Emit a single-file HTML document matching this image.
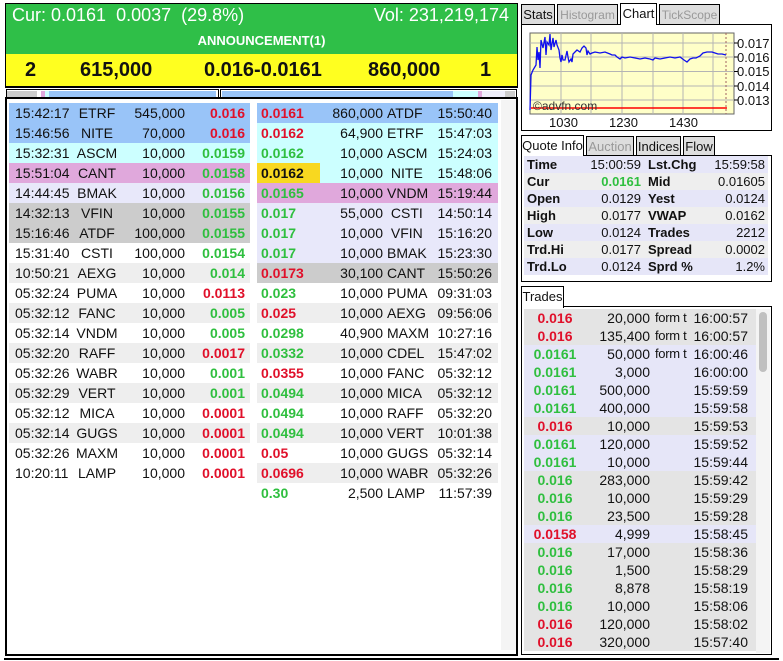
<!DOCTYPE html>
<html><head><meta charset="utf-8"><style>
*{box-sizing:border-box;margin:0;padding:0}
body{width:783px;height:661px;background:#fff;font-family:"Liberation Sans",Arial,sans-serif;font-size:14px;color:#111;position:relative;overflow:hidden}
.a{position:absolute}
.row{position:absolute;height:20px;line-height:20px;white-space:nowrap}
.row span{position:absolute}
.L{left:9px;width:241px}
.L .t{left:6px}.L .k{left:59px;width:58px;text-align:center}.L .v{right:65px}.L .p{right:5px;font-weight:bold}
.R{left:257px;width:241px}
.R .p{left:4px;font-weight:bold}.R .v{right:115px}.R .k{left:130px}.R .t{right:6px}
.g{color:#2fbf3f}.r{color:#e0102a}
.bl{background:#99c4f8}.cy{background:#ccffff}.pk{background:#e0a8dc}.lv{background:#e8e8fa}.gr{background:#cccccc}.ee{background:#eeeeee}
.tab{position:absolute;height:21px;line-height:20px;border:1px solid #000;border-bottom:none;background:#ddd;color:#999;text-align:center;font-size:12px;white-space:nowrap;overflow:hidden}
.tab.on{background:#fff;color:#111;height:22px}
.tab.m{font-size:13px}
.q{position:absolute;left:524px;width:244px;height:17px;line-height:17px;font-size:13px}
.q span{position:absolute}
.q .l1{left:3px;font-weight:bold}.q .v1{right:127px}.q .l2{left:124px;font-weight:bold}.q .v2{right:3px}
.tr{position:absolute;left:524px;width:232px;height:18px;line-height:18px;white-space:nowrap}
.tr span{position:absolute}
.tr .p{left:0;width:62px;text-align:center;font-weight:bold}.tr .v{right:106px}.tr .f{left:131px;font-size:13px;letter-spacing:-0.3px}.tr .t{right:8px}
.tg{background:#e4e4e4}.tl{background:#e6e6f8}
</style></head><body>
<div class="a" style="left:5px;top:3px;width:513px;height:653px;border:2px solid #000"></div>
<div class="a" style="left:6px;top:4px;width:511px;height:50px;background:#2fbf48"></div>
<div class="a" style="left:12px;top:5px;color:#fff;font-size:18px">Cur: 0.0161&nbsp; 0.0037&nbsp; (29.8%)</div>
<div class="a" style="right:274px;top:5px;color:#fff;font-size:18px">Vol: 231,219,174</div>
<div class="a" style="left:6px;top:33px;width:511px;text-align:center;color:#fff;font-weight:bold;font-size:13px">ANNOUNCEMENT(1)</div>
<div class="a" style="left:6px;top:54px;width:511px;height:34px;background:#ffff20;border-bottom:2px solid #000"></div>
<div class="a" style="left:25px;top:59px;font-weight:bold;font-size:20px">2</div>
<div class="a" style="left:80px;top:59px;font-weight:bold;font-size:20px">615,000</div>
<div class="a" style="left:204px;top:59px;font-weight:bold;font-size:20px">0.016-0.0161</div>
<div class="a" style="left:368px;top:59px;font-weight:bold;font-size:20px">860,000</div>
<div class="a" style="left:480px;top:59px;font-weight:bold;font-size:20px">1</div>
<div class="a" style="left:5px;top:88px;width:513px;height:11px;background:#fff;border-bottom:2px solid #000"></div>
<div class="a" style="left:6px;top:89px;width:213px;height:9px;border:1px solid #000"></div>
<div class="a" style="left:220px;top:89px;width:297px;height:9px;border:1px solid #000"></div>
<div class="a" style="left:7px;top:91px;width:30px;height:6px;background:#ccc"></div>
<div class="a" style="left:41px;top:91px;width:4px;height:6px;background:#e0a8dc"></div>
<div class="a" style="left:45px;top:91px;width:4px;height:6px;background:#ccffff"></div>
<div class="a" style="left:49px;top:91px;width:167px;height:6px;background:#99c4f8"></div>
<div class="a" style="left:222px;top:91px;width:231px;height:6px;background:#99c4f8"></div>
<div class="a" style="left:453px;top:91px;width:25px;height:6px;background:#ccffff"></div>
<div class="a" style="left:478px;top:91px;width:4px;height:6px;background:#e0a8dc"></div>
<div class="a" style="left:482px;top:91px;width:23px;height:6px;background:#eeeefa"></div>
<div class="a" style="left:505px;top:91px;width:10px;height:6px;background:#ccc"></div>
<div class="a" style="left:501px;top:100px;width:15px;height:550px;background:#f4f4f4"></div>

<div class="row L bl" style="top:103px"><span class="t">15:42:17</span><span class="k">ETRF</span><span class="v">545,000</span><span class="p r">0.016</span></div>
<div class="row L bl" style="top:123px"><span class="t">15:46:56</span><span class="k">NITE</span><span class="v">70,000</span><span class="p r">0.016</span></div>
<div class="row L cy" style="top:143px"><span class="t">15:32:31</span><span class="k">ASCM</span><span class="v">10,000</span><span class="p g">0.0159</span></div>
<div class="row L pk" style="top:163px"><span class="t">15:51:04</span><span class="k">CANT</span><span class="v">10,000</span><span class="p g">0.0158</span></div>
<div class="row L lv" style="top:183px"><span class="t">14:44:45</span><span class="k">BMAK</span><span class="v">10,000</span><span class="p g">0.0156</span></div>
<div class="row L gr" style="top:203px"><span class="t">14:32:13</span><span class="k">VFIN</span><span class="v">10,000</span><span class="p g">0.0155</span></div>
<div class="row L gr" style="top:223px"><span class="t">15:16:46</span><span class="k">ATDF</span><span class="v">100,000</span><span class="p g">0.0155</span></div>
<div class="row L" style="top:243px"><span class="t">15:31:40</span><span class="k">CSTI</span><span class="v">100,000</span><span class="p g">0.0154</span></div>
<div class="row L ee" style="top:263px"><span class="t">10:50:21</span><span class="k">AEXG</span><span class="v">10,000</span><span class="p g">0.014</span></div>
<div class="row L" style="top:283px"><span class="t">05:32:24</span><span class="k">PUMA</span><span class="v">10,000</span><span class="p r">0.0113</span></div>
<div class="row L ee" style="top:303px"><span class="t">05:32:12</span><span class="k">FANC</span><span class="v">10,000</span><span class="p g">0.005</span></div>
<div class="row L" style="top:323px"><span class="t">05:32:14</span><span class="k">VNDM</span><span class="v">10,000</span><span class="p g">0.005</span></div>
<div class="row L ee" style="top:343px"><span class="t">05:32:20</span><span class="k">RAFF</span><span class="v">10,000</span><span class="p r">0.0017</span></div>
<div class="row L" style="top:363px"><span class="t">05:32:26</span><span class="k">WABR</span><span class="v">10,000</span><span class="p g">0.001</span></div>
<div class="row L ee" style="top:383px"><span class="t">05:32:29</span><span class="k">VERT</span><span class="v">10,000</span><span class="p g">0.001</span></div>
<div class="row L" style="top:403px"><span class="t">05:32:12</span><span class="k">MICA</span><span class="v">10,000</span><span class="p r">0.0001</span></div>
<div class="row L ee" style="top:423px"><span class="t">05:32:14</span><span class="k">GUGS</span><span class="v">10,000</span><span class="p r">0.0001</span></div>
<div class="row L" style="top:443px"><span class="t">05:32:26</span><span class="k">MAXM</span><span class="v">10,000</span><span class="p r">0.0001</span></div>
<div class="row L" style="top:463px"><span class="t">10:20:11</span><span class="k">LAMP</span><span class="v">10,000</span><span class="p r">0.0001</span></div>

<div class="row R bl" style="top:103px"><span class="p r">0.0161</span><span class="v">860,000</span><span class="k">ATDF</span><span class="t">15:50:40</span></div>
<div class="row R cy" style="top:123px"><span class="p r">0.0162</span><span class="v">64,900</span><span class="k">ETRF</span><span class="t">15:47:03</span></div>
<div class="row R cy" style="top:143px"><span class="p g">0.0162</span><span class="v">10,000</span><span class="k">ASCM</span><span class="t">15:24:03</span></div>
<div class="row R cy" style="top:163px"><span class="a" style="left:0;top:0;width:63px;height:20px;background:#f8d820"></span><span class="p">0.0162</span><span class="v">10,000</span><span class="k">&nbsp;NITE</span><span class="t">15:48:06</span></div>
<div class="row R pk" style="top:183px"><span class="p g">0.0165</span><span class="v">10,000</span><span class="k">VNDM</span><span class="t">15:19:44</span></div>
<div class="row R lv" style="top:203px"><span class="p g">0.017</span><span class="v">55,000</span><span class="k">&nbsp;CSTI</span><span class="t">14:50:14</span></div>
<div class="row R lv" style="top:223px"><span class="p g">0.017</span><span class="v">10,000</span><span class="k">&nbsp;VFIN</span><span class="t">15:16:20</span></div>
<div class="row R lv" style="top:243px"><span class="p g">0.017</span><span class="v">10,000</span><span class="k">BMAK</span><span class="t">15:23:30</span></div>
<div class="row R gr" style="top:263px"><span class="p r">0.0173</span><span class="v">30,100</span><span class="k">CANT</span><span class="t">15:50:26</span></div>
<div class="row R" style="top:283px"><span class="p g">0.023</span><span class="v">10,000</span><span class="k">PUMA</span><span class="t">09:31:03</span></div>
<div class="row R ee" style="top:303px"><span class="p r">0.025</span><span class="v">10,000</span><span class="k">AEXG</span><span class="t">09:56:06</span></div>
<div class="row R" style="top:323px"><span class="p g">0.0298</span><span class="v">40,900</span><span class="k">MAXM</span><span class="t">10:27:16</span></div>
<div class="row R ee" style="top:343px"><span class="p g">0.0332</span><span class="v">10,000</span><span class="k">CDEL</span><span class="t">15:47:02</span></div>
<div class="row R" style="top:363px"><span class="p r">0.0355</span><span class="v">10,000</span><span class="k">FANC</span><span class="t">05:32:12</span></div>
<div class="row R ee" style="top:383px"><span class="p g">0.0494</span><span class="v">10,000</span><span class="k">MICA</span><span class="t">05:32:12</span></div>
<div class="row R" style="top:403px"><span class="p g">0.0494</span><span class="v">10,000</span><span class="k">RAFF</span><span class="t">05:32:20</span></div>
<div class="row R ee" style="top:423px"><span class="p g">0.0494</span><span class="v">10,000</span><span class="k">VERT</span><span class="t">10:01:38</span></div>
<div class="row R" style="top:443px"><span class="p r">0.05</span><span class="v">10,000</span><span class="k">GUGS</span><span class="t">05:32:14</span></div>
<div class="row R ee" style="top:463px"><span class="p r">0.0696</span><span class="v">10,000</span><span class="k">WABR</span><span class="t">05:32:26</span></div>
<div class="row R" style="top:483px"><span class="p g">0.30</span><span class="v">2,500</span><span class="k">LAMP</span><span class="t">11:57:39</span></div>

<div class="a" style="left:4px;top:658px;width:775px;height:3px;border-top:2px solid #000"></div>

<div class="tab m" style="left:521px;top:4px;width:34px;color:#111">Stats</div>
<div class="tab" style="left:557px;top:4px;width:61px">Histogram</div>
<div class="tab on m" style="left:620px;top:3px;width:37px">Chart</div>
<div class="tab" style="left:659px;top:4px;width:61px">TickScope</div>
<div class="a" style="left:521px;top:24px;width:251px;height:107px;border:1px solid #000"></div>
<div class="a" style="left:621px;top:24px;width:35px;height:1px;background:#fff"></div>
<svg class="a" style="left:0;top:0" width="783" height="140">
<rect x="530" y="33" width="204" height="81" fill="#ffffc8" stroke="#666" stroke-width="1"/>
<g stroke="#b4b4b4" stroke-width="1">
<line x1="561" y1="33" x2="561" y2="114"/><line x1="591" y1="33" x2="591" y2="114"/><line x1="622" y1="33" x2="622" y2="114"/><line x1="653" y1="33" x2="653" y2="114"/><line x1="683" y1="33" x2="683" y2="114"/><line x1="713" y1="33" x2="713" y2="114"/>
<line x1="530" y1="43" x2="734" y2="43"/><line x1="530" y1="57" x2="734" y2="57"/><line x1="530" y1="71.5" x2="734" y2="71.5"/><line x1="530" y1="86" x2="734" y2="86"/><line x1="530" y1="100" x2="734" y2="100"/>
</g>
<line x1="726" y1="33" x2="726" y2="114" stroke="#a06060" stroke-dasharray="2,2"/>
<g stroke="#000"><line x1="734" y1="43" x2="738" y2="43"/><line x1="734" y1="57" x2="738" y2="57"/><line x1="734" y1="71.5" x2="738" y2="71.5"/><line x1="734" y1="86" x2="738" y2="86"/><line x1="734" y1="100" x2="738" y2="100"/></g>
<polyline fill="none" stroke="#1010ee" stroke-width="1.3" points="530,110 531,75 533,70 536,65 537,47 538,60 539,52 540,68 541,40 543,48 545,37 546,55 547,42 549,45 550,34 551,50 553,38 554,47 556,40 557,45 559,50 560,58 561,62 562,55 563,60 565,60 567,51 568,57 569,62 571,59 572,62 573,54 575,52 577,50 580,52 582,48 584,46 586,48 587,55 588,51 590,54 592,53 595,52 600,53 605,52 610,54 612,55 615,55 617,57 620,59 622,57 625,58 630,57 635,58 640,59 645,58 650,59 653,60 655,58 660,59 665,58 670,57 675,58 680,57 684,60 687,62 690,59 693,58 696,58 700,56 703,53 707,52 712,52 715,53 718,54 722,54 726,55"/>
<line x1="531" y1="108" x2="727" y2="108" stroke="#ff0000" stroke-width="1.5"/>
<text x="533" y="110" font-family="Liberation Sans" font-size="12" fill="#333">©advfn.com</text>
<g font-family="Liberation Sans" font-size="13" fill="#111">
<text x="737" y="48">0.017</text><text x="737" y="62">0.016</text><text x="737" y="76">0.015</text><text x="737" y="91">0.014</text><text x="737" y="105">0.013</text>
<text x="549" y="127">1030</text><text x="609" y="127">1230</text><text x="669" y="127">1430</text>
</g>
</svg>

<div class="tab on m" style="left:521px;top:135px;width:63px">Quote Info</div>
<div class="tab m" style="left:586px;top:136px;width:48px">Auction</div>
<div class="tab m" style="left:636px;top:136px;width:45px;color:#111">Indices</div>
<div class="tab m" style="left:683px;top:136px;width:32px;color:#111">Flow</div>
<div class="a" style="left:521px;top:155px;width:251px;height:127px;border:1px solid #000"></div>
<div class="a" style="left:522px;top:155px;width:61px;height:1px;background:#fff"></div>
<div class="q tl" style="top:156px"><span class="l1">Time</span><span class="v1">15:00:59</span><span class="l2">Lst.Chg</span><span class="v2">15:59:58</span></div>
<div class="q ee" style="top:173px"><span class="l1">Cur</span><span class="v1 g" style="font-weight:bold">0.0161</span><span class="l2">Mid</span><span class="v2">0.01605</span></div>
<div class="q tl" style="top:190px"><span class="l1">Open</span><span class="v1">0.0129</span><span class="l2">Yest</span><span class="v2">0.0124</span></div>
<div class="q ee" style="top:207px"><span class="l1">High</span><span class="v1">0.0177</span><span class="l2">VWAP</span><span class="v2">0.0162</span></div>
<div class="q tl" style="top:224px"><span class="l1">Low</span><span class="v1">0.0124</span><span class="l2">Trades</span><span class="v2">2212</span></div>
<div class="q ee" style="top:241px"><span class="l1">Trd.Hi</span><span class="v1">0.0177</span><span class="l2">Spread</span><span class="v2">0.0002</span></div>
<div class="q tl" style="top:258px"><span class="l1">Trd.Lo</span><span class="v1">0.0124</span><span class="l2">Sprd %</span><span class="v2">1.2%</span></div>

<div class="tab on m" style="left:521px;top:286px;width:43px">Trades</div>
<div class="a" style="left:521px;top:306px;width:251px;height:349px;border:1px solid #000"></div>
<div class="a" style="left:522px;top:306px;width:41px;height:1px;background:#fff"></div>
<div class="a" style="left:756px;top:309px;width:14px;height:344px;background:#f4f4f4"></div>
<div class="a" style="left:759px;top:312px;width:8px;height:60px;background:#c0c0c0;border-radius:4px"></div>
<div class="tr tg" style="top:309px"><span class="p r">0.016</span><span class="v">20,000</span><span class="f">form t</span><span class="t">16:00:57</span></div>
<div class="tr tg" style="top:327px"><span class="p r">0.016</span><span class="v">135,400</span><span class="f">form t</span><span class="t">16:00:57</span></div>
<div class="tr tl" style="top:345px"><span class="p g">0.0161</span><span class="v">50,000</span><span class="f">form t</span><span class="t">16:00:46</span></div>
<div class="tr tl" style="top:363px"><span class="p g">0.0161</span><span class="v">3,000</span><span class="t">16:00:00</span></div>
<div class="tr tl" style="top:381px"><span class="p g">0.0161</span><span class="v">500,000</span><span class="t">15:59:59</span></div>
<div class="tr tl" style="top:399px"><span class="p g">0.0161</span><span class="v">400,000</span><span class="t">15:59:58</span></div>
<div class="tr tg" style="top:417px"><span class="p r">0.016</span><span class="v">10,000</span><span class="t">15:59:53</span></div>
<div class="tr tl" style="top:435px"><span class="p g">0.0161</span><span class="v">120,000</span><span class="t">15:59:52</span></div>
<div class="tr tl" style="top:453px"><span class="p g">0.0161</span><span class="v">10,000</span><span class="t">15:59:44</span></div>
<div class="tr tg" style="top:471px"><span class="p g">0.016</span><span class="v">283,000</span><span class="t">15:59:42</span></div>
<div class="tr tg" style="top:489px"><span class="p g">0.016</span><span class="v">10,000</span><span class="t">15:59:29</span></div>
<div class="tr tg" style="top:507px"><span class="p g">0.016</span><span class="v">23,500</span><span class="t">15:59:28</span></div>
<div class="tr tl" style="top:525px"><span class="p r">0.0158</span><span class="v">4,999</span><span class="t">15:58:45</span></div>
<div class="tr tg" style="top:543px"><span class="p g">0.016</span><span class="v">17,000</span><span class="t">15:58:36</span></div>
<div class="tr tg" style="top:561px"><span class="p g">0.016</span><span class="v">1,500</span><span class="t">15:58:29</span></div>
<div class="tr tg" style="top:579px"><span class="p g">0.016</span><span class="v">8,878</span><span class="t">15:58:19</span></div>
<div class="tr tg" style="top:597px"><span class="p g">0.016</span><span class="v">10,000</span><span class="t">15:58:06</span></div>
<div class="tr tg" style="top:615px"><span class="p r">0.016</span><span class="v">120,000</span><span class="t">15:58:02</span></div>
<div class="tr tg" style="top:633px"><span class="p r">0.016</span><span class="v">320,000</span><span class="t">15:57:40</span></div>
</body></html>
